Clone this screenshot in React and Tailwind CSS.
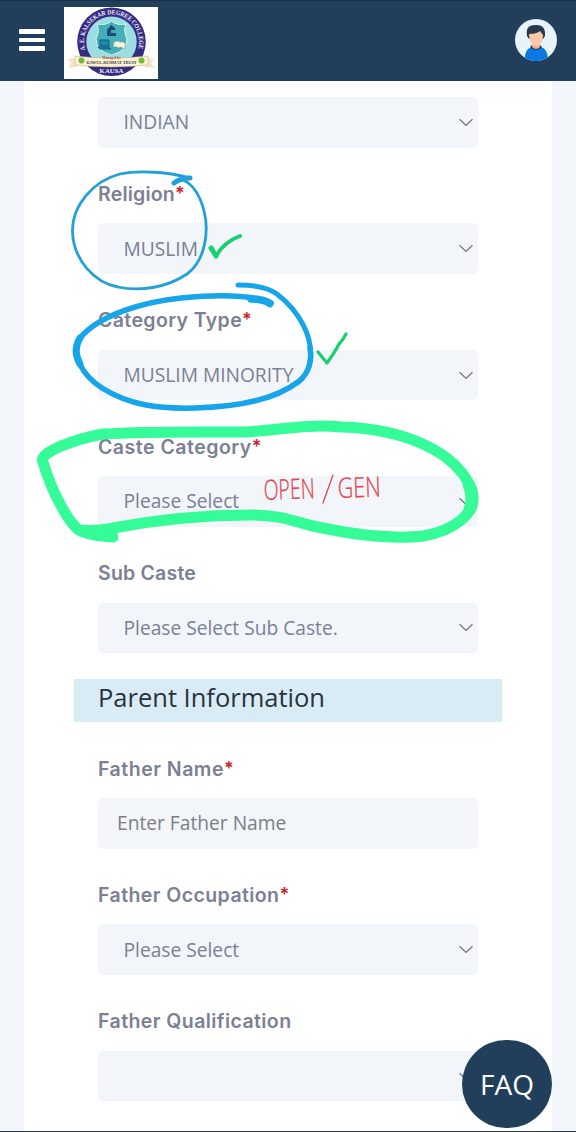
const Chevron = () => (
  <svg className="mr-[4px] h-[9px] w-[16px] shrink-0" viewBox="0 0 16 9" fill="none">
    <path d="M1.5 1.2 L8 7.4 L14.5 1.2" stroke="#77777c" strokeWidth="1.3" />
  </svg>
);

function Label({ text, required, spacing }) {
  return (
    <div className="flex h-[75.8px] items-end pb-[15.4px] font-['Inter',sans-serif] text-[19.5px] leading-[28px] font-semibold text-[#7b8094]">
      <span className={`whitespace-nowrap ${spacing}`}>{text}</span>
      {required && <span className="text-[18px] text-[#cf1f26]">*</span>}
    </div>
  );
}

function Select({ value }) {
  return (
    <div className="flex h-[50.6px] items-center justify-between rounded-[5px] bg-[#f2f5fa] pl-[25.5px] text-[19.2px] leading-[26px] text-[#7b8094]">
      <span className="whitespace-nowrap">{value}</span>
      <Chevron />
    </div>
  );
}

function Logo() {
  return (
    <div className="ml-[19px] h-[72px] w-[94px] bg-white">
      <svg className="h-full w-full" viewBox="0 0 94 72">
        <defs>
          <path id="arc-top" d="M21.2 42.8 A27.5 27.5 0 1 1 73.8 42.8" />
        </defs>
        <circle cx="47.5" cy="34.8" r="34.3" fill="#352c82" />
        <circle cx="47.5" cy="34.8" r="25.2" fill="#9bdde2" />
        <path d="M47.5 14 Q53 19 62 17 Q59 24 63 32 Q63 44 47.5 48 Q32 44 32 32 Q36 24 33 17 Q42 19 47.5 14Z" fill="#45afb9" stroke="#d9f4ef" strokeWidth="1" />
        <path d="M43 29 V23 L47 18 L51 21 V23 H47 V26 H52 V29Z" fill="#174b78" />
        <path d="M36 33 H45 V39 H36Z M34 40 H45 L47 42 H36Z" fill="#168eaa" stroke="#17557c" strokeWidth="1" />
        <path d="M50 35 Q54 33 56 35 Q59 34 62 37 L60 42 Q56 39 55 41 Q52 39 49 40Z" fill="#f7f4db" stroke="#649ba6" strokeWidth=".6" />
        <path d="M3 52 L13 51 V60 L4 61 L7 56Z M91 52 L81 51 V60 L91 61 L87 56Z" fill="#f8e4cb" />
        <path d="M11 49 Q47 53 84 49 V58 Q47 62 11 58Z" fill="#faf3cf" stroke="#c79d7c" strokeWidth=".5" />
        <circle cx="17.5" cy="53.5" r="3" fill="#79b83e" />
        <circle cx="77.5" cy="53.5" r="3" fill="#79b83e" />
        <text x="47.5" y="52" textAnchor="middle" fontFamily="Liberation Serif" fontSize="3.5" fontWeight="700" fill="#b84f44">Managed by</text>
        <text x="22.5" y="57" fontFamily="Liberation Serif" fontSize="5" fontWeight="700" fill="#44345a" textLength="50" lengthAdjust="spacingAndGlyphs">DAWUL-REHMAT TRUST</text>
        <g fontFamily="Liberation Serif" fontWeight="700" fill="#f3efff">
          <text fontSize="6.7">
            <textPath href="#arc-top" textLength="101" lengthAdjust="spacingAndGlyphs">A. E. KALSEKAR DEGREE COLLEGE</textPath>
          </text>
          <text x="47.5" y="66.3" fontSize="6.8" textAnchor="middle">KAUSA</text>
        </g>
      </svg>
    </div>
  );
}

function Avatar() {
  return (
    <svg className="h-[42px] w-[42px]" viewBox="0 0 42 42">
      <defs><clipPath id="face"><circle cx="21" cy="21" r="21" /></clipPath></defs>
      <g clipPath="url(#face)">
        <rect width="42" height="42" fill="#e8f4fc" />
        <path d="M10 42 Q9 29 18 28 H25 Q33 29 33 42Z" fill="#0b78e3" />
        <path d="M15 28 Q21 34 27 28 L25 26 H17Z" fill="#253448" />
        <path d="M17 22 H25 V28 Q21 32 17 28Z" fill="#efb393" />
        <path d="M12 17 Q10 6 20 6 Q31 5 30 17 L28 20 H14Z" fill="#29384b" />
        <path d="M14 15 Q22 15 25 12 L28 16 Q28 26 21 27 Q14 26 14 15Z" fill="#fbc9a9" />
      </g>
    </svg>
  );
}

function Annotations() {
  return (
    <svg className="pointer-events-none absolute top-0 left-0 h-[1132px] w-[576px]" viewBox="0 0 576 1132" fill="none" strokeLinecap="round" strokeLinejoin="round">
      <g stroke="#24a0d8">
        <path d="M190 178 C169 172 139 170 120 174 C92 181 72 207 72.5 231 C73 260 95 283 118 287 C141 292 168 287 187 274 C206 260 209 230 204 211 C200 195 192 184 183 180" strokeWidth="2.8" />
        <path d="M174 183 Q181 178 190 178" strokeWidth="5" />
      </g>
      <g stroke="#16a5e9">
        <path d="M271 303 C250 294 211 295 181 298 C143 302 99 315 80 338 C70 354 82 375 102 388 C129 405 158 409 195 408 C235 407 273 401 298 382 C310 373 312 359 310 348" strokeWidth="5.5" />
        <path d="M80 338 C75 346 75 355 80 364" strokeWidth="7" />
        <path d="M310 362 C314 337 299 311 277 294 C266 286 251 285 238 285" strokeWidth="5" />
        <path d="M251 299 Q263 299 270 303.5" strokeWidth="7.5" />
      </g>
      <g stroke="#19cf70">
        <path d="M212 248 L216 256 Q224 242 240 236" strokeWidth="3.8" />
        <path d="M211 248 L216 256" strokeWidth="5" />
        <path d="M318 352 L327 363 Q335 352 339 344 Q343 340 346 334" strokeWidth="3.2" />
      </g>
      <g stroke="#35fb98">
        <path d="M113 537 C99 536 89 535 79 530 C69 523 52 493 43 462 C38 452 76 439 103 434 C150 431 198 432 246 432 C285 429 309 424 342 427 C404 429 455 451 471 488 C482 514 449 532 423 536 C388 540 350 534 313 526 C292 521 282 515 250 515 C203 515 156 520 113 528 C104 530 92 531 79 530" strokeWidth="11" />
        <path d="M84 531 L113 528 L113 536Z" fill="#35fb98" strokeWidth="9" />
        <path d="M469 485 Q474 497 470 509" strokeWidth="12.5" />
      </g>
      <path d="M323 503 L333 475" stroke="#d94a4e" strokeWidth="1.3" />
      <g fontFamily="Open Sans, sans-serif" fontWeight="300" fill="#d94a4e" stroke="#d94a4e" strokeWidth=".3">
        <text x="264" y="500" transform="rotate(-2 264 500)" fontSize="28" textLength="51" lengthAdjust="spacingAndGlyphs">OPEN</text>
        <text x="338" y="498" transform="rotate(-2 338 498)" fontSize="28" textLength="43" lengthAdjust="spacingAndGlyphs">GEN</text>
      </g>
    </svg>
  );
}

export default function App() {
  return (
    <div className="relative flex h-[1132px] w-[576px] flex-col overflow-hidden border-b border-[#263d4e] bg-[#f2f5fa] font-['Open_Sans',sans-serif]">
      <header className="flex h-[81px] shrink-0 items-center border-t border-[#173149] bg-[#213f5b] pr-[19px] pl-[19px] pt-[4px]">
        <div className="-mt-[6px] flex w-[26px] flex-col gap-[4px]">
          <span className="h-[4.5px] rounded-[1px] bg-white" />
          <span className="h-[4.5px] rounded-[1px] bg-white" />
          <span className="h-[4.5px] rounded-[1px] bg-white" />
        </div>
        <Logo />
        <div className="-mt-[6px] ml-auto"><Avatar /></div>
      </header>
      <main className="mx-6 min-h-0 flex-1 bg-white px-[50px] pt-[16px]">
        <div className="px-6">
          <Select value="INDIAN" />
          <Label text="Religion" required spacing="tracking-[0.2px]" />
          <Select value="MUSLIM" />
          <Label text="Category Type" required spacing="tracking-[0.38px]" />
          <Select value="MUSLIM MINORITY" />
          <Label text="Caste Category" required spacing="tracking-[0.5px]" />
          <Select value="Please Select" />
          <Label text="Sub Caste" spacing="tracking-[0.2px]" />
          <Select value="Please Select Sub Caste." />
        </div>
        <h2 className="mt-[26px] flex h-[43px] items-center bg-[#d9ecf5] px-6 pb-[8px] text-[25.5px] leading-[34px] text-[#26343d]">Parent Information</h2>
        <div className="px-6">
          <Label text="Father Name" required spacing="tracking-[0.5px]" />
          <div className="flex h-[50.6px] items-center rounded-[5px] bg-[#f2f5fa] pl-[19px] text-[19.2px] leading-[26px] text-[#7d7f85]">Enter Father Name</div>
          <Label text="Father Occupation" required spacing="tracking-[0.42px]" />
          <Select value="Please Select" />
          <Label text="Father Qualification" spacing="tracking-[0.42px]" />
          <Select value="" />
        </div>
      </main>
      <Annotations />
      <button className="absolute top-[1040px] left-[462px] flex h-[88px] w-[90px] items-center justify-center rounded-full bg-[#213f5b] text-[28px] leading-[36px] text-white">FAQ</button>
    </div>
  );
}
